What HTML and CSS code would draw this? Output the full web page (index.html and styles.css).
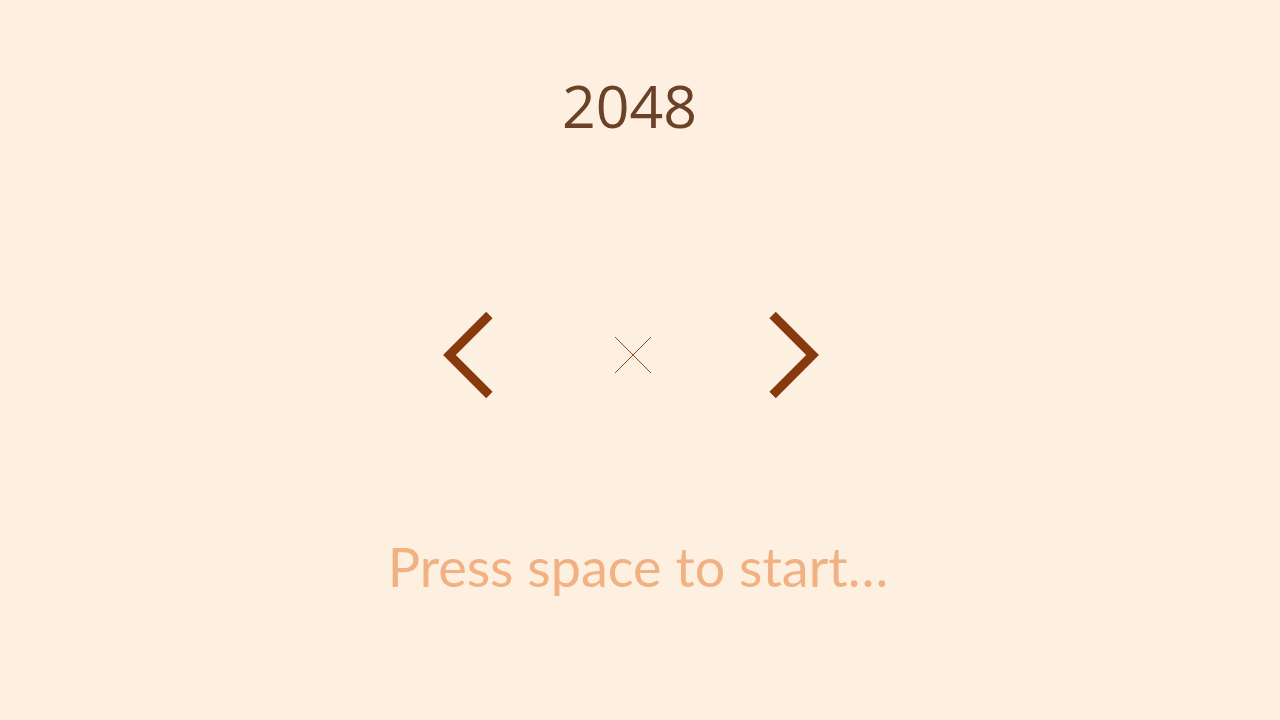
FILE: index.html
```html
<!DOCTYPE html>
<html>
<head>
<meta charset="utf-8">
<link rel="stylesheet" href="styles.css">
</head>
<body>
<main class="screen">
  <h1 class="title">2048</h1>
  <div class="controls">
    <svg class="chev" width="52" height="100" viewBox="0 0 52 100"><polyline points="47.4,10 7.4,50 47.4,90" fill="none" stroke="#873a0d" stroke-width="9"/></svg>
    <svg class="cross" width="38" height="38" viewBox="0 0 38 38"><path d="M1 1 L37 37 M37 1 L1 37" stroke="#8b4a24" stroke-width="1" fill="none"/></svg>
    <svg class="chev" width="52" height="100" viewBox="0 0 52 100"><polyline points="4.6,10 44.6,50 4.6,90" fill="none" stroke="#873a0d" stroke-width="9"/></svg>
  </div>
  <p class="prompt">Press space to start…</p>
</main>
</body>
</html>
```
FILE: styles.css
```css
html, body {
  margin: 0;
  padding: 0;
  background: #fdf0e1;
}
.screen {
  width: 1280px;
  height: 720px;
  display: flex;
  flex-direction: column;
  align-items: center;
}
.title {
  margin: 67px 21px 0 0;
  font-family: "Open Sans", sans-serif;
  font-weight: 500;
  font-size: 59px;
  line-height: 76px;
  color: #6b4128;
}
.controls {
  margin: 162px 18px 0 0;
  display: flex;
  align-items: center;
}
.cross {
  margin: 0 116px 0 120px;
}
.prompt {
  margin: 130px 4px 0 0;
  font-family: Lato, sans-serif;
  font-size: 54px;
  line-height: 64px;
  color: #f2b182;
}
```
